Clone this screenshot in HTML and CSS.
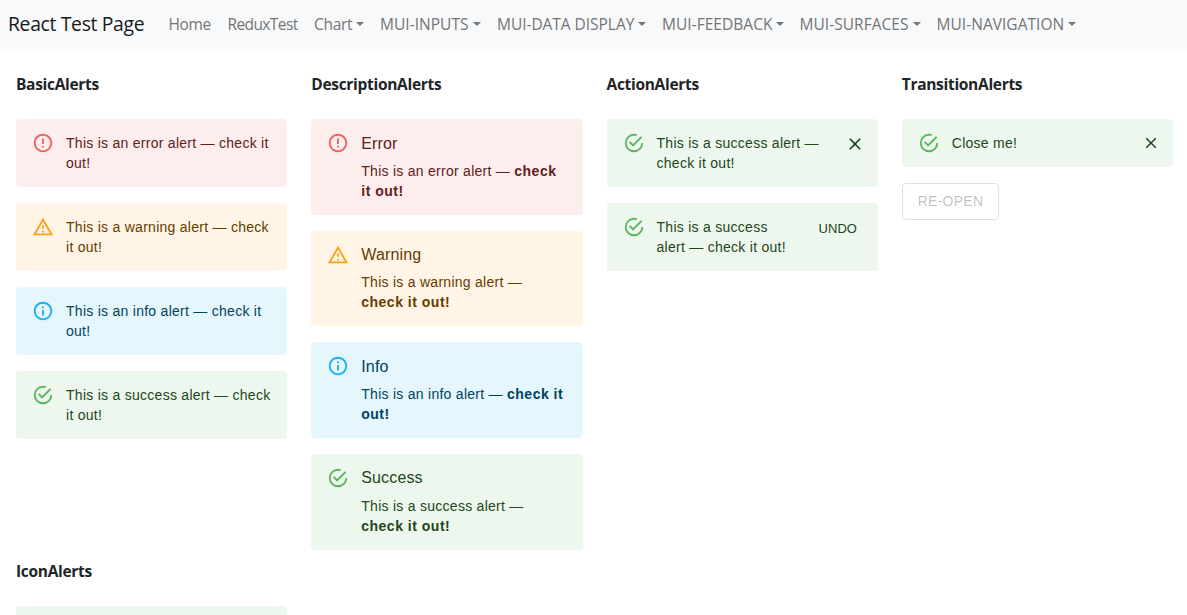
FILE: index.html
```html
<!DOCTYPE html>
<html lang="en">
<head>
<meta charset="utf-8">
<title>React Test Page</title>
<link rel="stylesheet" href="styles.css">
</head>
<body>
<svg class="defs" aria-hidden="true">
  <symbol id="error" viewBox="0 0 24 24"><path d="M11 15h2v2h-2zm0-8h2v6h-2zm.99-5C6.47 2 2 6.48 2 12s4.47 10 9.99 10C17.52 22 22 17.52 22 12S17.52 2 11.99 2zM12 20c-4.42 0-8-3.58-8-8s3.58-8 8-8 8 3.58 8 8-3.58 8-8 8z"/></symbol>
  <symbol id="warning" viewBox="0 0 24 24"><path d="M12 5.99L19.53 19H4.47L12 5.99M12 2L1 21h22L12 2zm1 14h-2v2h2v-2zm0-6h-2v4h2v-4z"/></symbol>
  <symbol id="info" viewBox="0 0 24 24"><path d="M11 7h2v2h-2zm0 4h2v6h-2zm1-9C6.48 2 2 6.48 2 12s4.48 10 10 10 10-4.48 10-10S17.52 2 12 2zm0 18c-4.41 0-8-3.59-8-8s3.59-8 8-8 8 3.59 8 8-3.59 8-8 8z"/></symbol>
  <symbol id="success" viewBox="0 0 24 24"><path d="M20 12a8 8 0 1 1-8-8c.76 0 1.5.11 2.2.31l1.57-1.57A9.82 9.82 0 0 0 12 2a10 10 0 1 0 10 10h-2M7.91 10.08L6.5 11.5 11 16 21 6l-1.41-1.42L11 13.17l-3.09-3.09z"/></symbol>
  <symbol id="close" viewBox="0 0 24 24"><path d="M19 6.41L17.59 5 12 10.59 6.41 5 5 6.41 10.59 12 5 17.59 6.41 19 12 13.41 17.59 19 19 17.59 13.41 12z"/></symbol>
</svg>
<nav class="navbar">
  <a class="brand">React Test Page</a>
  <a class="link home">Home</a>
  <a class="link redux">ReduxTest</a>
  <a class="link chart drop">Chart</a>
  <a class="link inputs drop">MUI-INPUTS</a>
  <a class="link data drop">MUI-DATA DISPLAY</a>
  <a class="link feedback drop">MUI-FEEDBACK</a>
  <a class="link surfaces drop">MUI-SURFACES</a>
  <a class="link navigation drop">MUI-NAVIGATION</a>
</nav>
<main class="grid">
  <section>
    <h2 class="heading">BasicAlerts</h2>
    <div class="stack">
      <div class="alert error"><svg class="icon"><use href="#error"/></svg><div class="message">This is an error alert — check it out!</div></div>
      <div class="alert warning"><svg class="icon"><use href="#warning"/></svg><div class="message">This is a warning alert — check it out!</div></div>
      <div class="alert info"><svg class="icon"><use href="#info"/></svg><div class="message">This is an info alert — check it out!</div></div>
      <div class="alert success"><svg class="icon"><use href="#success"/></svg><div class="message">This is a success alert — check it out!</div></div>
    </div>
  </section>
  <section>
    <h2 class="heading">DescriptionAlerts</h2>
    <div class="stack">
      <div class="alert error"><svg class="icon"><use href="#error"/></svg><div class="message titled"><div class="title">Error</div>This is an error alert — <strong>check it out!</strong></div></div>
      <div class="alert warning"><svg class="icon"><use href="#warning"/></svg><div class="message titled"><div class="title">Warning</div>This is a warning alert —<br><strong>check it out!</strong></div></div>
      <div class="alert info"><svg class="icon"><use href="#info"/></svg><div class="message titled"><div class="title">Info</div>This is an info alert — <strong>check it out!</strong></div></div>
      <div class="alert success"><svg class="icon"><use href="#success"/></svg><div class="message titled"><div class="title">Success</div>This is a success alert —<br><strong>check it out!</strong></div></div>
    </div>
  </section>
  <section>
    <h2 class="heading">ActionAlerts</h2>
    <div class="stack">
      <div class="alert success"><svg class="icon"><use href="#success"/></svg><div class="message">This is a success alert — check it out!</div><div class="action"><button class="close"><svg class="close-icon"><use href="#close"/></svg></button></div></div>
      <div class="alert success"><svg class="icon"><use href="#success"/></svg><div class="message">This is a success alert — check it out!</div><div class="action"><button class="undo">UNDO</button></div></div>
    </div>
  </section>
  <section>
    <h2 class="heading">TransitionAlerts</h2>
    <div class="stack">
      <div class="alert success"><svg class="icon"><use href="#success"/></svg><div class="message">Close me!</div><div class="action"><button class="close"><svg class="close-icon small"><use href="#close"/></svg></button></div></div>
      <button class="reopen" disabled>RE-OPEN</button>
    </div>
  </section>
  <section>
    <h2 class="heading">IconAlerts</h2>
    <div class="stack">
      <div class="alert success"><div class="message"></div></div>
    </div>
  </section>
</main>
</body>
</html>
```
FILE: styles.css
```css
* { box-sizing: border-box; }
body {
  margin: 0;
  height: 615px;
  overflow: hidden;
  background: #fff;
  color: #212529;
  font-family: "Open Sans", "Noto Sans", sans-serif;
  font-size: 16px;
  line-height: 24px;
}
.defs { display: none; }
.navbar {
  display: flex;
  align-items: center;
  height: 51px;
  padding: 0 0 3px 8px;
  background: #f8f9fa;
  white-space: nowrap;
}
.brand { width: 160.5px; font-size: 19.4px; letter-spacing: -0.35px; color: #181818; }
.link { flex: none; font-size: 15.5px; color: #747576; letter-spacing: 0.03px; }
.home { width: 59px; letter-spacing: -0.4px; }
.redux { width: 86.5px; letter-spacing: -0.6px; }
.chart { width: 66px; letter-spacing: -0.3px; }
.inputs { width: 117px; }
.data { width: 165px; letter-spacing: -0.04px; }
.feedback { width: 137.5px; }
.surfaces { width: 137px; }
.navigation { width: 155.5px; }
.drop { display: flex; justify-content: space-between; padding-right: 16px; }
.drop::after {
  content: "";
  width: 0;
  height: 0;
  margin-top: 10px;
  border: 4px solid transparent;
  border-top-color: #747576;
  border-bottom: 0;
}
.grid {
  display: grid;
  grid-template-columns: repeat(4, minmax(0, 1fr));
  gap: 9.3px 24px;
  padding: 21px 14px 0 16px;
}
.heading { margin: 0 0 23px; font-size: 15.5px; line-height: 24px; font-weight: 700; letter-spacing: -0.3px; }
.stack { display: flex; flex-direction: column; gap: 16px; font-family: "Liberation Sans", Arial, sans-serif; }
.alert {
  display: flex;
  padding: 6px 16px;
  border-radius: 4px;
  font-size: 14px;
  line-height: 1.43;
  letter-spacing: 0.27px;
}
.error { background: #fdeded; color: #5f2120; fill: #ef5350; }
.warning { background: #fff4e5; color: #663c00; fill: #ff9800; }
.info { background: #e5f6fd; color: #014361; fill: #03a9f4; }
.success { background: #edf7ed; color: #1e4620; fill: #4caf50; }
.icon { flex: none; width: 22px; height: 22px; margin: 7px 12px 7px 0; opacity: 0.9; }
.message { padding: 8px 0; min-width: 0; }
.titled { padding-bottom: 7.8px; }
.titled strong { letter-spacing: 0.5px; }
.title { margin: -1.5px 0 5.3px; font-size: 16px; line-height: 1.5; letter-spacing: 0.00938em; }
.action { margin: 0 -8px 0 auto; padding: 4px 0 0 16px; }
button { border: 0; background: none; font-family: inherit; line-height: 1.75; }
.close { display: block; padding: 5px; }
.close-icon { display: block; width: 20px; height: 20px; fill: #1e4620; }
.close-icon.small { width: 18px; height: 18px; }
.undo { min-width: 64px; padding: 5px 5px 4px; font-size: 13px; letter-spacing: 0.1px; color: #1e4620; }
.reopen {
  align-self: flex-start;
  padding: 5px 15px;
  border: 1px solid rgba(0, 0, 0, 0.12);
  border-radius: 4px;
  font-size: 14px;
  letter-spacing: 0.25px;
  color: rgba(0, 0, 0, 0.26);
}
```
